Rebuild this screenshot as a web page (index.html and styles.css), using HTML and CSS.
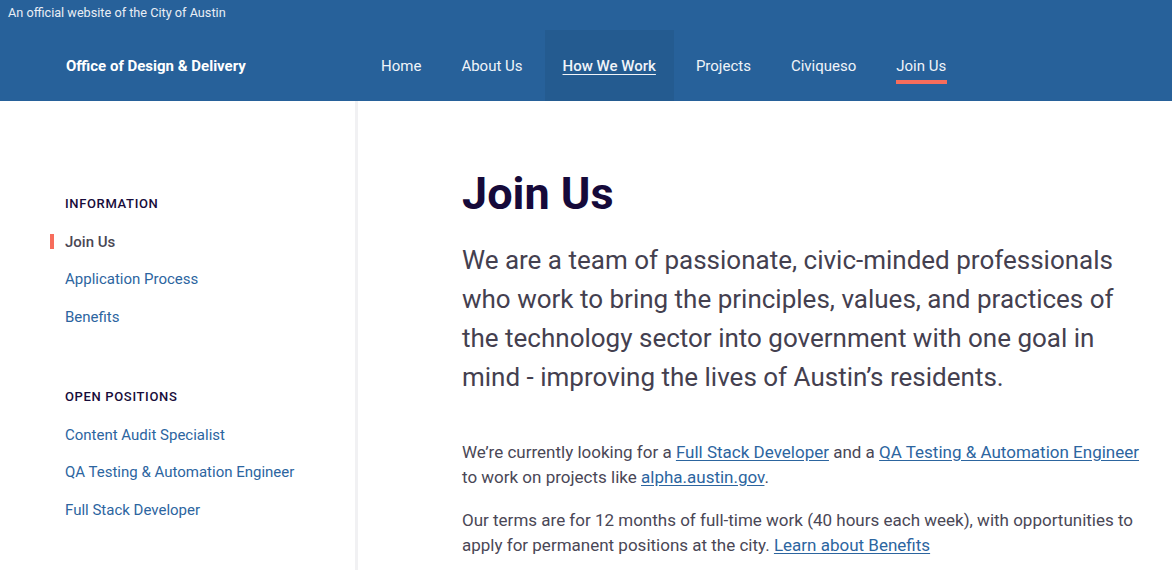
FILE: index.html
```html
<!DOCTYPE html>
<html lang="en">
<head>
<meta charset="utf-8">
<title>Join Us - Office of Design &amp; Delivery</title>
<link rel="stylesheet" href="styles.css">
</head>
<body>
<header class="site-header">
  <div class="official">An official website of the City of Austin</div>
  <div class="navbar">
    <a class="brand" href="#">Office of Design &amp; Delivery</a>
    <nav class="nav">
      <a class="nav-item" href="#">Home</a>
      <a class="nav-item" href="#">About Us</a>
      <a class="nav-item nav-hover" href="#">How We Work</a>
      <a class="nav-item" href="#">Projects</a>
      <a class="nav-item" href="#">Civiqueso</a>
      <a class="nav-item nav-active" href="#"><span>Join Us</span></a>
    </nav>
  </div>
</header>
<div class="layout">
  <aside class="sidebar">
    <h2 class="side-heading">Information</h2>
    <ul class="side-list">
      <li><a class="side-link current" href="#">Join Us</a></li>
      <li><a class="side-link" href="#">Application Process</a></li>
      <li><a class="side-link" href="#">Benefits</a></li>
    </ul>
    <h2 class="side-heading second">Open Positions</h2>
    <ul class="side-list">
      <li><a class="side-link" href="#">Content Audit Specialist</a></li>
      <li><a class="side-link" href="#">QA Testing &amp; Automation Engineer</a></li>
      <li><a class="side-link" href="#">Full Stack Developer</a></li>
    </ul>
  </aside>
  <main class="content">
    <h1 class="title">Join Us</h1>
    <p class="lead">We are a team of passionate, civic-minded professionals who work to bring the principles, values, and practices of the technology sector into government with one goal in mind - improving the lives of Austin’s residents.</p>
    <p class="body">We’re currently looking for a <a href="#">Full Stack Developer</a> and a <a href="#">QA Testing &amp; Automation Engineer</a> to work on projects like <a href="#">alpha.austin.gov</a>.</p>
    <p class="body">Our terms are for 12 months of full-time work (40 hours each week), with opportunities to apply for permanent positions at the city. <a href="#">Learn about Benefits</a></p>
  </main>
</div>
</body>
</html>
```
FILE: styles.css
```css
* { box-sizing: border-box; }
html, body { margin: 0; padding: 0; }
body {
  font-family: Roboto, "Liberation Sans", sans-serif;
  background: #fff;
  color: #44404f;
}
a { color: inherit; }

.site-header {
  background: #27619a;
  color: #fff;
}
.official {
  height: 30px;
  padding: 5px 8px 0;
  font-size: 12.7px;
  line-height: 15px;
  color: #e9eef5;
}
.navbar {
  display: flex;
  align-items: stretch;
  height: 71px;
}
.brand {
  display: flex;
  align-items: center;
  width: 357px;
  padding-left: 66px;
  font-size: 15px;
  font-weight: 700;
  color: #fff;
  text-decoration: none;
}
.nav {
  display: flex;
  gap: 4px;
  margin-left: 6px;
}
.nav-item {
  display: flex;
  align-items: center;
  padding: 0 18px;
  font-size: 15px;
  color: #f0f4f9;
  text-decoration: none;
  position: relative;
}
.nav-hover {
  background: #245b90;
  text-decoration: underline;
  text-underline-offset: 3px;
  font-weight: 500;
}
.nav-active span {
  position: relative;
}
.nav-active span::after {
  content: "";
  position: absolute;
  left: 0;
  right: -1px;
  bottom: -9px;
  height: 4px;
  background: #f76d5c;
}

.layout {
  display: flex;
}
.sidebar {
  width: 358px;
  flex: none;
  padding: 95px 0 40px 65px;
  border-right: 3px solid #f1f1f3;
  min-height: 469px;
}
.side-heading {
  margin: 0 0 11px;
  font-size: 13px;
  line-height: 16px;
  font-weight: 500;
  letter-spacing: 0.65px;
  text-transform: uppercase;
  color: #170c3a;
}
.side-heading.second {
  margin-top: 53px;
  margin-bottom: 11px;
}
.side-list {
  list-style: none;
  margin: 0;
  padding: 0;
}
.side-list li {
  height: 37.6px;
  display: flex;
  align-items: center;
}
.side-link {
  font-size: 15px;
  color: #2c659f;
  text-decoration: none;
  position: relative;
}
.side-link.current {
  color: #4a4754;
  font-weight: 500;
}
.side-link.current::before {
  content: "";
  position: absolute;
  left: -15px;
  top: 1px;
  width: 4px;
  height: 15px;
  background: #f76d5c;
}

.content {
  padding: 61px 30px 0 104px;
  max-width: 814px;
}
.title {
  margin: 0 0 15px;
  font-size: 45px;
  line-height: 64px;
  font-weight: 700;
  color: #160a3a;
}
.lead {
  margin: 0 0 43px;
  font-size: 26px;
  line-height: 39px;
  color: #44404f;
}
.body {
  margin: 0 0 18px;
  font-size: 17px;
  line-height: 25px;
  color: #4a4756;
}
.body a {
  color: #2c659f;
  text-decoration: underline;
  text-underline-offset: 2px;
}
```
